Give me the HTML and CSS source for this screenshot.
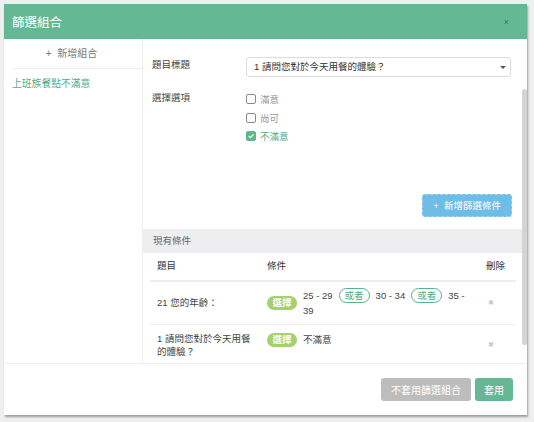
FILE: index.html
```html
<!DOCTYPE html>
<html lang="zh-Hant">
<head>
    <meta charset="UTF-8">
    <meta name="viewport" content="width=device-width, initial-scale=1.0">
    <title>篩選組合</title>
    <link rel="stylesheet" href="styles.css">
</head>
<body>
    <div class="modal">
        <div class="modal-header">
            <h3>篩選組合</h3>
            <span class="close">&times;</span>
        </div>

        <div class="modal-body">
            <div class="sidebar">
                <div class="add-group">+&nbsp; 新增組合</div>
                <div class="group-item">上班族餐點不滿意</div>
            </div>

            <div class="main">
                <div class="form">
                    <div class="form-row">
                        <label>題目標題</label>
                        <div class="select">1 請問您對於今天用餐的體驗？<span class="caret"></span></div>
                    </div>
                    <div class="form-row options-row">
                        <label>選擇選項</label>
                        <div class="options">
                            <div class="option"><span class="box"></span>滿意</div>
                            <div class="option"><span class="box"></span>尚可</div>
                            <div class="option checked">
                                <span class="box">
                                    <svg width="10" height="10" viewBox="0 0 10 10"><path d="M2.4 5.2 L4.2 7 L7.8 3.2" fill="none" stroke="#fff" stroke-width="1.5" stroke-linecap="round" stroke-linejoin="round"/></svg>
                                </span>不滿意
                            </div>
                        </div>
                    </div>
                    <div class="actions">
                        <button class="btn-add">+&nbsp; 新增篩選條件</button>
                    </div>
                </div>

                <div class="band">現有條件</div>

                <table class="conditions">
                    <thead>
                        <tr>
                            <th class="col-q">題目</th>
                            <th>條件</th>
                            <th class="col-del">刪除</th>
                        </tr>
                    </thead>
                    <tbody>
                        <tr class="row-1">
                            <td>21 您的年齡：</td>
                            <td class="cond">
                                <div class="cond-wrap">
                                    <span class="pill">選擇</span>
                                    <div class="values">
                                        <div class="line"><span>25 - 29</span><span class="or">或者</span><span>30 - 34</span><span class="or">或者</span><span>35 -</span></div>
                                        <div class="line">39</div>
                                    </div>
                                </div>
                            </td>
                            <td class="del">&#10006;</td>
                        </tr>
                        <tr class="row-2">
                            <td>
                                <div>1 請問您對於今天用餐</div>
                                <div>的體驗？</div>
                            </td>
                            <td class="cond">
                                <div class="cond-wrap">
                                    <span class="pill">選擇</span>
                                    <div class="values">不滿意</div>
                                </div>
                            </td>
                            <td class="del">&#10006;</td>
                        </tr>
                    </tbody>
                </table>
            </div>

            <div class="scrollbar"><div class="thumb"></div></div>
        </div>

        <div class="modal-footer">
            <button class="btn btn-gray">不套用篩選組合</button>
            <button class="btn btn-green">套用</button>
        </div>
    </div>
</body>
</html>
```

FILE: styles.css
```css
* { box-sizing: border-box; margin: 0; padding: 0; }
body { background: #efefef; font-family: "Liberation Sans", "Noto Sans CJK TC", sans-serif; font-size: 9.5px; color: #444; }

.modal { margin: 4px; width: 523px; height: 411px; background: #fff; display: flex; flex-direction: column; box-shadow: 1px 2px 2px rgba(0,0,0,0.35); }

.modal-header { height: 35px; background: #65b894; display: flex; align-items: center; justify-content: space-between; padding: 0 18px 0 8px; }
.modal-header h3 { font-size: 12.5px; font-weight: normal; color: #fff; }
.close { font-size: 9px; color: rgba(0,0,0,0.45); }

.modal-body { height: 324px; display: flex; }
.sidebar { width: 139px; border-right: 1px solid #eee; }
.add-group { height: 30px; line-height: 30px; text-align: center; color: #777; margin-left: 8px; padding-right: 11px; border-bottom: 1px solid #eee; font-size: 10px; }
.group-item { height: 30px; line-height: 30px; padding-left: 8px; color: #52ad86; font-size: 9.8px; }

.main { flex: 1; overflow: hidden; }
.form { padding: 18px 10px 12px 9px; }
.form-row { display: flex; align-items: flex-start; }
.form-row label { width: 94px; line-height: 16px; color: #444; }
.options-row { margin-top: 13px; }
.select { flex: 1; height: 20px; line-height: 18px; border: 1px solid #ddd; border-radius: 3px; padding: 0 7px; color: #333; position: relative; margin-right: 1px; }
.caret { position: absolute; right: 4px; top: 8px; border-left: 3px solid transparent; border-right: 3px solid transparent; border-top: 3px solid #555; }

.options { display: flex; flex-direction: column; }
.option { height: 18.5px; display: flex; align-items: center; color: #999; }
.box { width: 10px; height: 10px; border: 1px solid #8a8a8a; border-radius: 2px; margin-right: 4px; display: flex; align-items: center; justify-content: center; }
.option.checked { color: #52ad86; }
.option.checked .box { background: #5cb68f; border-color: #5cb68f; }
.box svg { display: block; }

.actions { display: flex; justify-content: flex-end; margin-top: 48px; }
.btn-add { height: 23px; padding: 0 10px; background: #6dbde6; color: #fff; border: 1px dashed #a7d7f1; border-radius: 3px; font: inherit; }

.band { height: 24px; line-height: 24px; background: #eeedf0; padding-left: 10px; color: #666; }

.conditions { width: 366px; margin-left: 7px; border-collapse: collapse; }
.conditions th { text-align: left; font-weight: normal; color: #333; padding: 7px 7px 8px; line-height: 12px; border-bottom: 2px solid #eee; }
.col-q { width: 110px; }
.col-del { width: 37px; }
.conditions td { padding: 6px 7px; vertical-align: middle; color: #444; line-height: 13px; border-bottom: 1px solid #eee; }
.conditions .row-2 td { padding-top: 7px; }
.conditions td.cond { vertical-align: top; }
.conditions .row-2 td.cond { padding-top: 8px; }
.cond-wrap { display: flex; align-items: center; }
.pill { flex: none; width: 30px; height: 14px; line-height: 14px; text-align: center; border-radius: 7px; background: #a4d16c; color: #fff; font-weight: bold; margin-right: 6px; }
.values { line-height: 14px; color: #444; }
.line { display: flex; align-items: center; gap: 6px; }
.line:first-child { height: 16px; }
.or { height: 15px; line-height: 13px; padding: 0 5px; border: 1px solid #5aaf8e; border-radius: 8px; color: #52ad86; margin-top: -1px; }
.conditions td.del { color: #c4c4c4; font-size: 7px; padding-left: 9px; }

.scrollbar { width: 5px; }
.thumb { margin-top: 50px; height: 256px; background: #d4d4d4; border-radius: 3px; }

.modal-footer { height: 52px; border-top: 1px solid #eee; display: flex; justify-content: flex-end; align-items: center; padding-right: 14px; gap: 4px; }
.btn { height: 23px; border: none; border-radius: 3px; color: #fff; font: inherit; font-size: 10px; }
.btn-gray { background: #bdbdbd; padding: 0 10px; }
.btn-green { background: #65b894; padding: 0 9px; }
```
